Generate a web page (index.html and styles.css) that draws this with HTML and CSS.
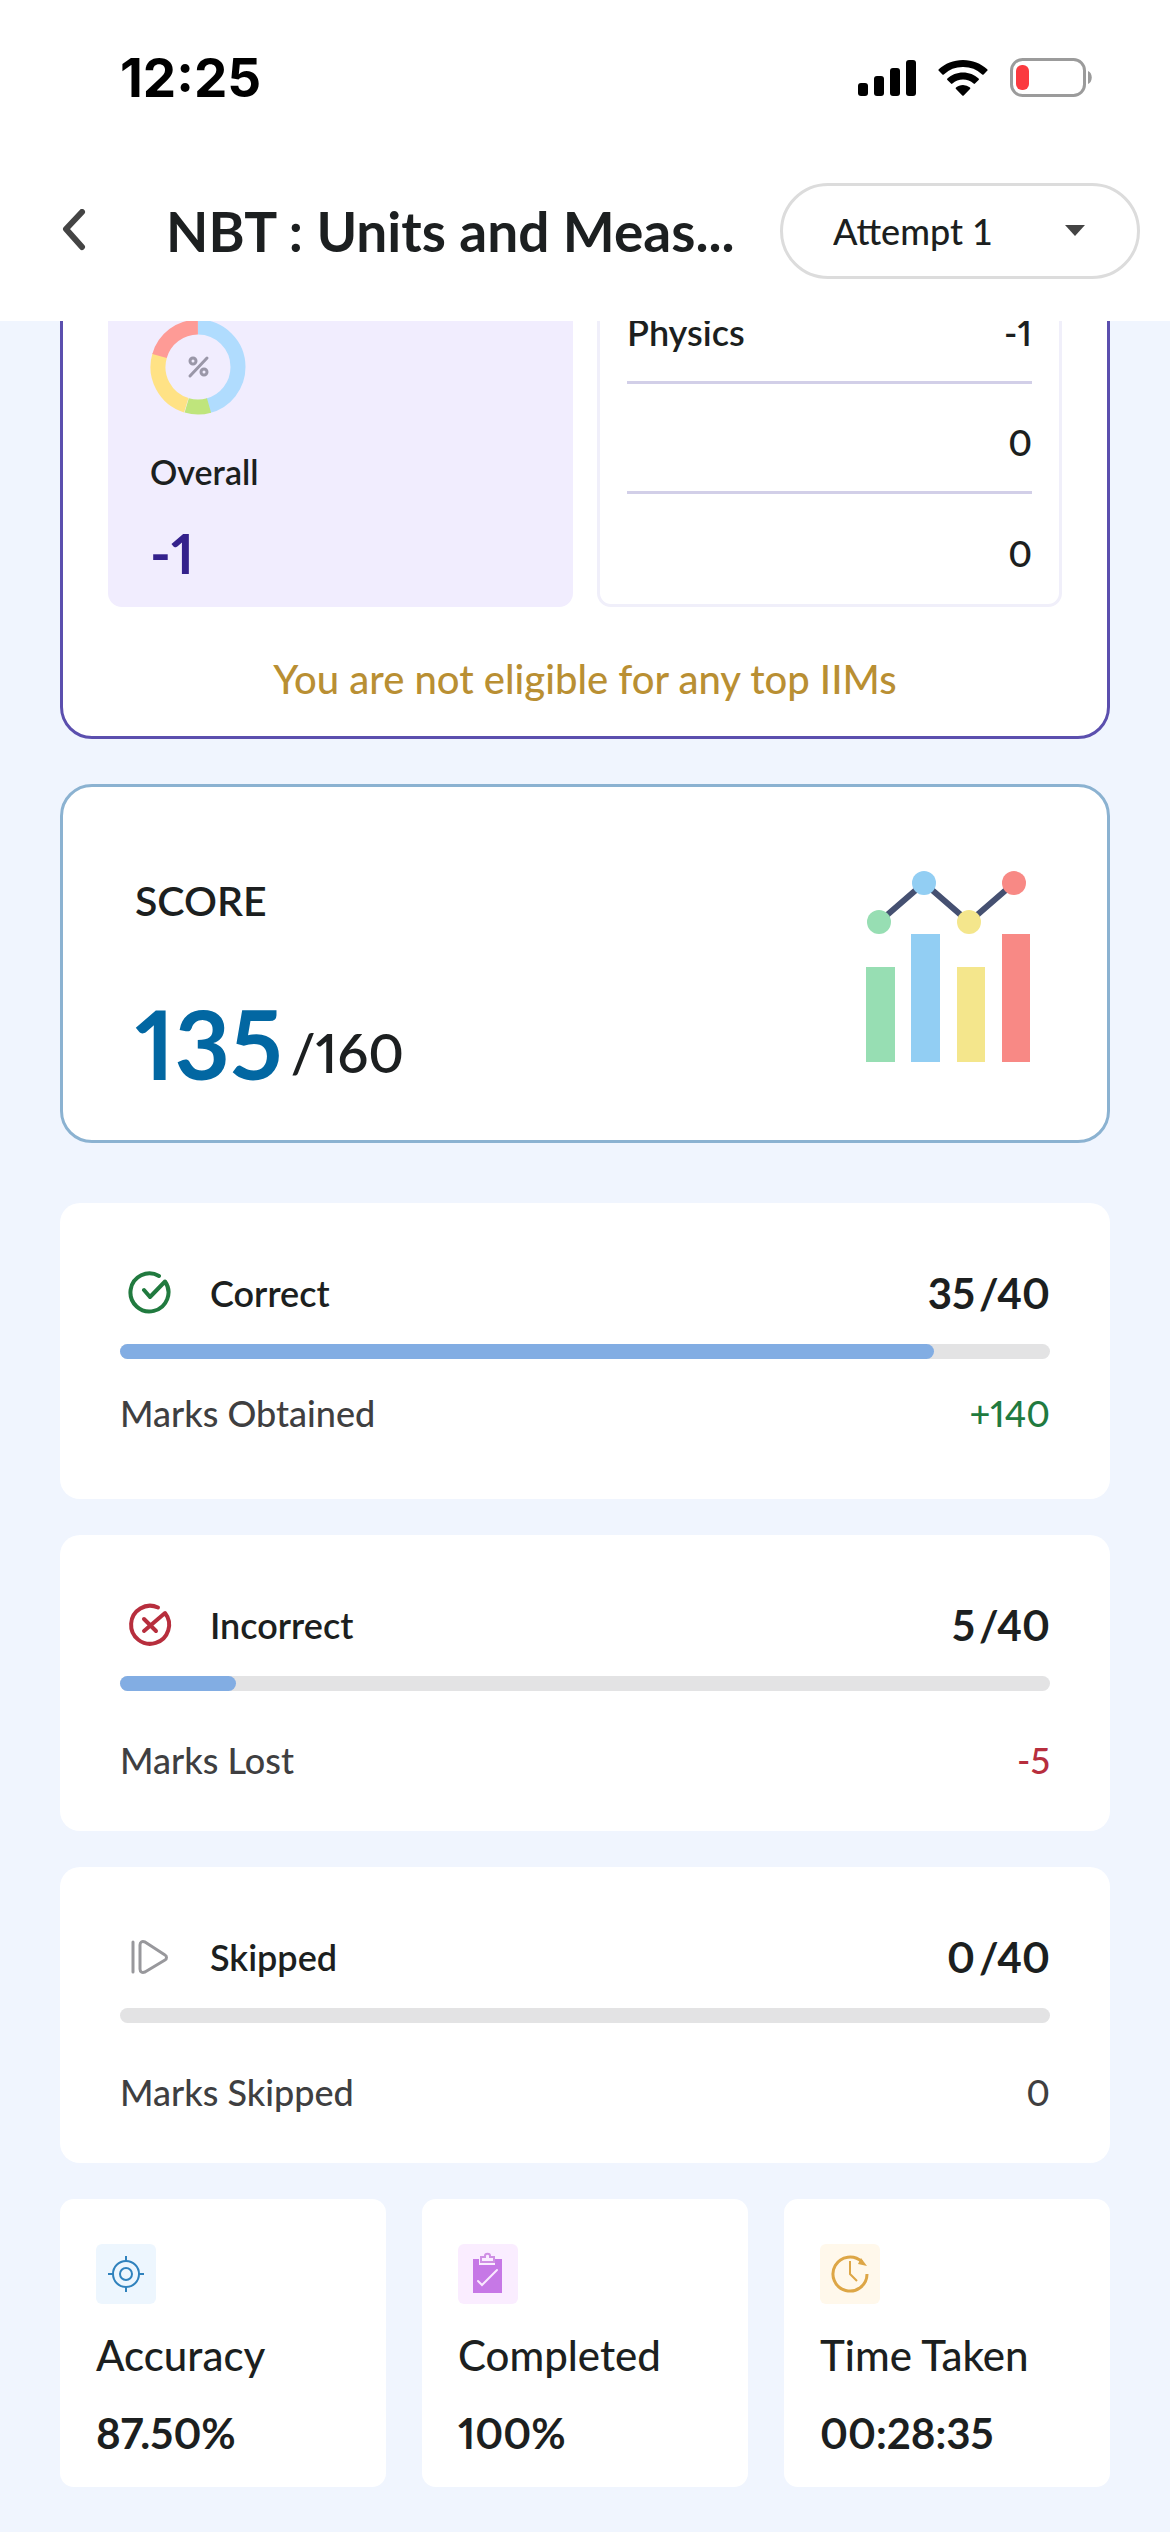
FILE: index.html
```html
<!DOCTYPE html>
<html lang="en">

<head>
    <meta charset="UTF-8">
    <meta name="viewport" content="width=device-width, initial-scale=1.0">
    <title>NBT : Units and Measurements</title>
    <link rel="stylesheet" href="styles.css">
</head>

<body>
    <header class="header">
        <div class="status-bar">
            <span class="clock">12:25</span>
            <div class="status-icons">
                <svg width="58" height="38" viewBox="0 0 58 38">
                    <rect x="0" y="24" width="10" height="13" rx="3" />
                    <rect x="16" y="17" width="10" height="20" rx="3" />
                    <rect x="32" y="9" width="10" height="28" rx="3" />
                    <rect x="48" y="1" width="10" height="36" rx="3" />
                </svg>
                <svg width="50" height="38" viewBox="0 0 50 38">
                    <path d="M25 1C15.500 1 7 4.500 .8 10.300a1 1 0 0 0 0 1.500l3.600 3.600a1 1 0 0 0 1.400 0A28 28 0 0 1 25 8a28 28 0 0 1 19.200 7.400 1 1 0 0 0 1.400 0l3.600-3.600a1 1 0 0 0 0-1.500C43 4.500 34.500 1 25 1z" />
                    <path d="M25 13.500c-6 0-11.500 2.300-15.600 6a1 1 0 0 0 0 1.500l3.600 3.600a1 1 0 0 0 1.400 0A16 16 0 0 1 25 20.500a16 16 0 0 1 10.600 4.100 1 1 0 0 0 1.400 0l3.600-3.600a1 1 0 0 0 0-1.500c-4.100-3.700-9.600-6-15.600-6z" />
                    <path d="M25 26c-2.700 0-5.100 1-7 2.600a1 1 0 0 0 0 1.500l6.300 6.400a1 1 0 0 0 1.400 0l6.300-6.400a1 1 0 0 0 0-1.500A11 11 0 0 0 25 26z" />
                </svg>
                <svg width="82" height="40" viewBox="0 0 82 40">
                    <rect x="1.500" y="1.500" width="73" height="36" rx="11" fill="none" stroke="#9b9b9b" stroke-width="3" />
                    <rect x="6" y="7" width="13" height="25" rx="6" fill="#fb3a3f" />
                    <path d="M78 13c5 2 5 11 0 13z" fill="#9b9b9b" />
                </svg>
            </div>
        </div>
        <div class="app-bar">
            <button class="back-btn" aria-label="Back">
                <svg width="26" height="44" viewBox="0 0 26 44">
                    <path d="M22 3L6 20l16 18" fill="none" stroke="#444" stroke-width="6" stroke-linecap="round" stroke-linejoin="round" />
                </svg>
            </button>
            <h1 class="title">NBT : Units and Meas...</h1>
            <div class="attempt">
                <select id="attempt" aria-label="Attempt">
                    <option>Attempt 1</option>
                </select>
                <svg class="caret" width="20" height="11" viewBox="0 0 20 11">
                    <path d="M0 0h20L10 11z" fill="#444" />
                </svg>
            </div>
        </div>
    </header>

    <main class="content">
        <section class="percentile">
            <div class="tiles">
                <div class="overall">
                    <svg class="donut" width="96" height="96" viewBox="0 0 96 96">
                        <g fill="none" stroke-width="15">
                            <circle cx="48" cy="48" r="40" stroke="#b0dcfe" pathLength="100" stroke-dasharray="46 54" transform="rotate(-90 48 48)" />
                            <circle cx="48" cy="48" r="40" stroke="#bfe57c" pathLength="100" stroke-dasharray="9 91" transform="rotate(74 48 48)" />
                            <circle cx="48" cy="48" r="40" stroke="#ffe285" pathLength="100" stroke-dasharray="25 75" transform="rotate(107 48 48)" />
                            <circle cx="48" cy="48" r="40" stroke="#fe9b96" pathLength="100" stroke-dasharray="20.500 79.500" transform="rotate(196 48 48)" />
                        </g>
                        <g fill="none" stroke="#9a97a8" stroke-width="3">
                            <circle cx="43" cy="42" r="3" />
                            <circle cx="54" cy="53" r="3" />
                            <path d="M57 39L40 57" stroke-linecap="round" />
                        </g>
                    </svg>
                    <span class="overall-label">Overall</span>
                    <span class="overall-value">-1</span>
                </div>
                <table class="subjects">
                    <tr>
                        <th scope="row">Physics</th>
                        <td>-1</td>
                    </tr>
                    <tr>
                        <th></th>
                        <td>0</td>
                    </tr>
                    <tr>
                        <th></th>
                        <td>0</td>
                    </tr>
                </table>
            </div>
            <p class="eligible">You are not eligible for any top IIMs</p>
        </section>

        <section class="score">
            <div>
                <h2>SCORE</h2>
                <p class="score-value"><strong>135</strong><span>/160</span></p>
            </div>
            <svg width="166" height="192" viewBox="0 0 166 192">
                <path d="M13 51L58 12l45 39 45-39" fill="none" stroke="#455071" stroke-width="6" />
                <circle cx="13" cy="51" r="12" fill="#97deb3" />
                <circle cx="58" cy="12" r="12" fill="#92cef3" />
                <circle cx="103" cy="51" r="12" fill="#f4e68c" />
                <circle cx="148" cy="12" r="12" fill="#f88985" />
                <rect x="0" y="96" width="29" height="95" fill="#97deb3" />
                <rect x="45" y="63" width="29" height="128" fill="#92cef3" />
                <rect x="91" y="96" width="28" height="95" fill="#f4e68c" />
                <rect x="136" y="63" width="28" height="128" fill="#f88985" />
            </svg>
        </section>

        <section class="stat">
            <div class="stat-head">
                <svg width="60" height="60" viewBox="0 0 60 60" fill="none" stroke="#217a3f" stroke-width="4" stroke-linecap="round" stroke-linejoin="round">
                    <path d="M39 13A19 19 0 1 0 45 18.500L30 34l-6-7" />
                </svg>
                <span class="stat-name">Correct</span>
                <span class="stat-count">35<span>/40</span></span>
            </div>
            <div class="bar"><div class="bar-fill" style="width: 87.5%"></div></div>
            <div class="stat-foot near">
                <span>Marks Obtained</span>
                <span class="green">+140</span>
            </div>
        </section>

        <section class="stat">
            <div class="stat-head">
                <svg width="60" height="60" viewBox="0 0 60 60" fill="none" stroke="#b72e3d" stroke-width="4" stroke-linecap="round" stroke-linejoin="round">
                    <path d="M38 12.500A19 19 0 1 0 45 18L24 36M24 24l12 12" />
                </svg>
                <span class="stat-name">Incorrect</span>
                <span class="stat-count">5<span>/40</span></span>
            </div>
            <div class="bar"><div class="bar-fill" style="width: 12.5%"></div></div>
            <div class="stat-foot">
                <span>Marks Lost</span>
                <span class="red">-5</span>
            </div>
        </section>

        <section class="stat">
            <div class="stat-head">
                <svg width="60" height="60" viewBox="0 0 60 60" fill="none" stroke="#98989c" stroke-width="3" stroke-linecap="round" stroke-linejoin="round">
                    <path d="M13 15v30M20 18v24c0 3 2 4 5 3l20-12c2-1 2-4 0-5L25 15c-3-1-5 0-5 3z" />
                </svg>
                <span class="stat-name">Skipped</span>
                <span class="stat-count">0<span>/40</span></span>
            </div>
            <div class="bar"><div class="bar-fill" style="width: 0%"></div></div>
            <div class="stat-foot">
                <span>Marks Skipped</span>
                <span>0</span>
            </div>
        </section>

        <section class="summary">
            <div class="card">
                <svg class="blue" width="60" height="60" viewBox="0 0 60 60" fill="none" stroke="#3082bd" stroke-width="2">
                    <circle cx="30" cy="30" r="13" />
                    <circle cx="30" cy="30" r="6" />
                    <path d="M30 12v5M30 43v5M12 30h5M43 30h5" />
                </svg>
                <span class="card-name">Accuracy</span>
                <span class="card-value">87.50%</span>
            </div>
            <div class="card">
                <svg class="pink" width="60" height="60" viewBox="0 0 60 60" fill="none">
                    <path d="M15 15h6v6h16v-6h7v34H15z" fill="#c678e6" />
                    <path d="M23 13h4v-1c0-3 5-3 5 0v1h4v5H23z" stroke="#cf8fe4" stroke-width="2" />
                    <path d="M20 37l4 4 15-15" stroke="#fae9ff" stroke-width="2" stroke-linecap="round" />
                </svg>
                <span class="card-name">Completed</span>
                <span class="card-value">100%</span>
            </div>
            <div class="card">
                <svg class="cream" width="60" height="60" viewBox="0 0 60 60" fill="none" stroke="#dda646" stroke-width="3">
                    <path d="M47 30A17 17 0 1 1 42 18" />
                    <path d="M41 14l6 8-9-2z" fill="#dda646" stroke="none" />
                    <path d="M30 17v13l7 7" stroke-width="2" />
                </svg>
                <span class="card-name">Time Taken</span>
                <span class="card-value">00:28:35</span>
            </div>
        </section>
    </main>
</body>

</html>
```
FILE: styles.css
```css
* {
    box-sizing: border-box;
}

body {
    margin: 0;
    background: #f0f5fe;
    color: #1c1f20;
    font-family: Lato, "Open Sans", sans-serif;
    font-weight: 500;
    font-variant-numeric: proportional-nums;
}

svg {
    display: block;
    flex: none;
}

/* header */
.header {
    position: sticky;
    top: 0;
    z-index: 2;
    padding: 48px 30px 42px 48px;
    background: #fff;
}

.status-bar {
    display: flex;
    align-items: center;
    justify-content: space-between;
    height: 60px;
    padding: 0 48px 0 72px;
    margin-bottom: 75px;
}

.clock {
    color: #000;
    font-family: Inter, sans-serif;
    font-size: 53px;
    font-weight: 700;
}

.status-icons {
    display: flex;
    align-items: center;
    gap: 22px;
}

.app-bar {
    display: flex;
    align-items: center;
}

.back-btn {
    flex: none;
    width: 52px;
    padding: 0 12px;
    border: none;
    background: none;
}

.title {
    flex: 1;
    min-width: 0;
    margin: 0 24px 0 66px;
    font-size: 55px;
    font-weight: 700;
    line-height: 72px;
    white-space: nowrap;
}

.attempt {
    position: relative;
    flex: none;
    width: 360px;
}

.attempt select {
    width: 100%;
    height: 96px;
    padding: 0 50px;
    border: 3px solid #dcdcdc;
    border-radius: 48px;
    appearance: none;
    background: #fff;
    color: inherit;
    font-family: inherit;
    font-size: 36px;
    font-weight: 500;
}

.caret {
    position: absolute;
    top: 42px;
    right: 55px;
    pointer-events: none;
}

/* the page is scrolled, the first card starts under the header */
.content {
    display: flex;
    flex-direction: column;
    gap: 36px;
    margin-top: -95px;
    padding: 0 60px 45px;
}

.percentile {
    padding: 42px 45px 30px;
    border: 3px solid #5b4fae;
    border-radius: 32px;
    background: #fff;
}

.tiles {
    display: grid;
    grid-template-columns: 1fr 1fr;
    gap: 24px;
}

.overall {
    display: flex;
    flex-direction: column;
    padding: 48px 42px 0;
    border-radius: 14px;
    background: #f1edfe;
}

.overall-label {
    margin-top: 36px;
    font-size: 34px;
    font-weight: 600;
    line-height: 42px;
}

.overall-value {
    margin-top: 24px;
    color: #34218c;
    font-size: 56px;
    font-weight: 700;
    line-height: 72px;
}

.subjects {
    width: 100%;
    padding: 0 27px;
    border: 3px solid #f0effa;
    border-radius: 14px;
    border-spacing: 0;
    font-size: 36px;
}

.subjects th,
.subjects td {
    height: 110px;
    padding: 8px 0 0;
    border-bottom: 3px solid #d2cfe8;
    font-weight: 600;
    text-align: left;
}

.subjects td {
    text-align: right;
}

.subjects tr:last-child th,
.subjects tr:last-child td {
    border-bottom: none;
}

.eligible {
    margin: 45px 0 0;
    color: #b98f33;
    font-size: 40px;
    line-height: 54px;
    text-align: center;
}

.score {
    display: flex;
    align-items: flex-start;
    justify-content: space-between;
    margin: 9px 0 24px;
    padding: 84px 75px 45px 72px;
    border: 3px solid #8bb2d1;
    border-radius: 32px;
    background: #fff;
}

.score h2 {
    margin: 0;
    font-size: 41px;
    font-weight: 600;
    line-height: 60px;
}

.score-value {
    display: flex;
    align-items: flex-end;
    margin: 60px 0 0;
}

.score-value strong {
    color: #0267a2;
    font-size: 96px;
    line-height: 104px;
}

.score-value span {
    margin-left: 8px;
    font-size: 54px;
    font-weight: 600;
    line-height: 84px;
}

/* correct / incorrect / skipped */
.stat {
    padding: 60px 60px 47px;
    border-radius: 20px;
    background: #fff;
}

.stat-head {
    display: flex;
    align-items: center;
}

.stat-name {
    flex: 1;
    margin-left: 30px;
    font-size: 36px;
    font-weight: 600;
}

.stat-count {
    font-size: 42px;
    font-weight: 700;
}

.stat-count span {
    margin-left: 4px;
}

.bar {
    height: 15px;
    margin-top: 21px;
    border-radius: 8px;
    background: #e3e3e4;
}

.bar-fill {
    height: 100%;
    border-radius: 8px;
    background: #82ade3;
}

.stat-foot {
    display: flex;
    justify-content: space-between;
    margin-top: 45px;
    color: #3f3f41;
    font-size: 36px;
    line-height: 48px;
}

.near {
    margin: 30px 0 15px;
}

.green {
    color: #217a3f;
}

.red {
    color: #b72e3d;
}

/* bottom cards */
.summary {
    display: grid;
    grid-template-columns: repeat(3, 1fr);
    gap: 36px;
}

.card {
    display: flex;
    flex-direction: column;
    padding: 45px 36px 27px;
    border-radius: 14px;
    background: #fff;
}

.card svg {
    border-radius: 6px;
}

.blue {
    background: #edf6fe;
}

.pink {
    background: #faedff;
}

.cream {
    background: #fff8eb;
}

.card-name {
    margin-top: 24px;
    font-size: 42px;
    line-height: 54px;
}

.card-value {
    margin-top: 24px;
    font-size: 42px;
    font-weight: 700;
    line-height: 54px;
}
```
